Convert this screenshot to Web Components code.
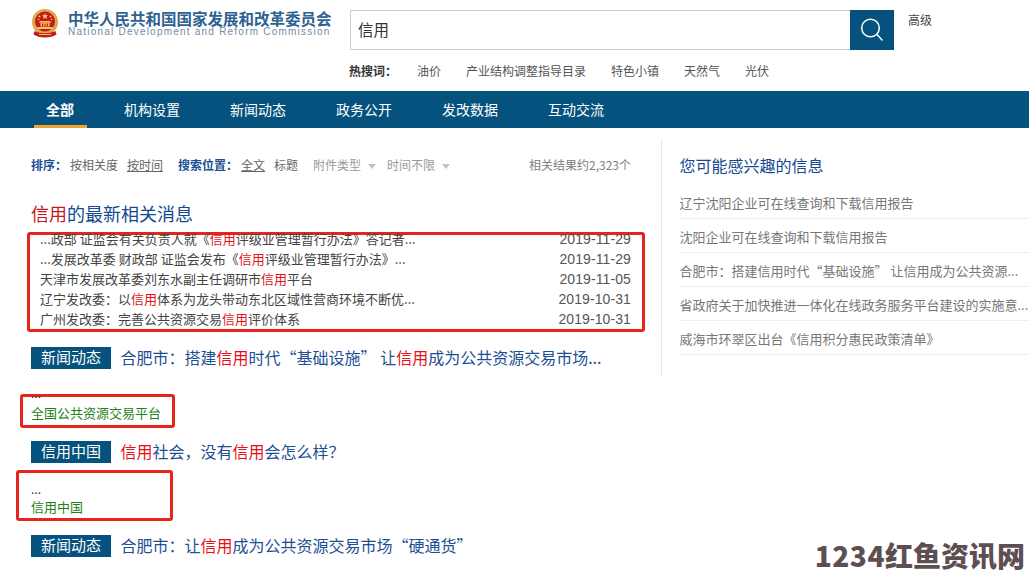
<!DOCTYPE html>
<html lang="zh-CN">
<head>
<meta charset="utf-8">
<title>信用 - 搜索</title>
<style>
  html, body { margin: 0; background: #fff; overflow: hidden; }
  body { font-family: "Noto Sans CJK SC", "Liberation Sans", sans-serif; }
</style>
</head>
<body>
<search-page>
  <site-header></site-header>
  <main-nav></main-nav>
  <div style="display:flex;align-items:flex-start">
    <result-column>
      <filter-bar></filter-bar>
      <latest-news>
        <news-line date="2019-11-29">...政部 证监会有关负责人就《<hl-word>信用</hl-word>评级业管理暂行办法》答记者...</news-line>
        <news-line date="2019-11-29">...发展改革委 财政部 证监会发布《<hl-word>信用</hl-word>评级业管理暂行办法》...</news-line>
        <news-line date="2019-11-05">天津市发展改革委刘东水副主任调研市<hl-word>信用</hl-word>平台</news-line>
        <news-line date="2019-10-31">辽宁发改委<mid-punct>：</mid-punct>以<hl-word>信用</hl-word>体系为龙头带动东北区域性营商环境不断优...</news-line>
        <news-line date="2019-10-31">广州发改委<mid-punct>：</mid-punct>完善公共资源交易<hl-word>信用</hl-word>评价体系</news-line>
      </latest-news>
      <result-item tag="新闻动态" style="margin-top:15px">合肥市<mid-punct>：</mid-punct>搭建<hl-word>信用</hl-word>时代“基础设施” 让<hl-word>信用</hl-word>成为公共资源交易市场...</result-item>
      <source-box source="全国公共资源交易平台" style="margin:25px 0 0 -11px;width:155px;height:34px" top="-12" gap="3"></source-box>
      <result-item tag="信用中国" style="margin-top:13px"><hl-word>信用</hl-word>社会<mid-punct>，</mid-punct>没有<hl-word>信用</hl-word>会怎么样<mid-punct>？</mid-punct></result-item>
      <source-box source="信用中国" style="margin:7px 0 0 -15px;width:157px;height:51px" top="8" gap="1" indent="12"></source-box>
      <result-item tag="新闻动态" style="margin-top:14px">合肥市<mid-punct>：</mid-punct>让<hl-word>信用</hl-word>成为公共资源交易市场“硬通货”</result-item>
    </result-column>
    <side-panel>
      <side-link>辽宁沈阳企业可在线查询和下载信用报告</side-link>
      <side-link>沈阳企业可在线查询和下载信用报告</side-link>
      <side-link>合肥市<mid-punct>：</mid-punct>搭建信用时代“基础设施” 让信用成为公共资源...</side-link>
      <side-link>省政府关于加快推进一体化在线政务服务平台建设的实施意...</side-link>
      <side-link>威海市环翠区出台《信用积分惠民政策清单》</side-link>
    </side-panel>
  </div>
</search-page>

<script>
class SearchPage extends HTMLElement {
  constructor() {
    super();
    const shadowRoot = this.attachShadow({ mode: 'open' });
    shadowRoot.innerHTML = `
      <style>
        :host {
          display: block;
          position: relative;
          width: 1029px;
          height: 580px;
          overflow: hidden;
        }
        .watermark {
          position: absolute;
          right: 4px;
          top: 535px;
          font-size: 28px;
          line-height: 40px;
          font-weight: 900;
          color: #5d4f51;
          white-space: nowrap;
          text-shadow: 0 0 2px #fff, 0 0 2px #fff;
        }
        .watermark span { letter-spacing: 0.5px; }
      </style>
      <slot></slot>
      <div class="watermark"><span>1234</span>红鱼资讯网</div>
    `;
  }
}

class SiteHeader extends HTMLElement {
  constructor() {
    super();
    const shadowRoot = this.attachShadow({ mode: 'open' });
    shadowRoot.innerHTML = `
      <style>
        :host {
          display: block;
          height: 91px;
          position: relative;
        }
        .top {
          display: flex;
          align-items: flex-start;
          height: 60px;
        }
        .logo {
          display: flex;
          margin: 9px 9px 0 31px;
          width: 28px;
          height: 30px;
          flex: none;
        }
        .name {
          width: 282px;
          margin-top: 10px;
          flex: none;
        }
        .cn {
          font-size: 15.5px;
          line-height: 16px;
          font-weight: 700;
          color: #2f6290;
          white-space: nowrap;
        }
        .en {
          font-family: "Liberation Sans", sans-serif;
          font-size: 10px;
          line-height: 10px;
          margin-top: 1px;
          letter-spacing: 1.22px;
          color: #6f8ca6;
          white-space: nowrap;
        }
        .search {
          display: flex;
          margin-top: 10px;
          width: 544px;
          height: 40px;
          flex: none;
        }
        .input {
          flex: 1;
          box-sizing: border-box;
          border: 1px solid #ccc;
          border-right: 0;
          padding-left: 7px;
          font-size: 15.5px;
          line-height: 37px;
          color: #333;
        }
        .btn {
          width: 44px;
          background: #05527e;
          display: flex;
          align-items: center;
          justify-content: center;
        }
        .adv {
          margin: 11px 0 0 14px;
          font-size: 12px;
          line-height: 18px;
          color: #444;
        }
        .hot {
          display: flex;
          margin: 1px 0 0 349px;
          font-size: 12px;
          line-height: 20px;
          color: #555;
          gap: 25px;
          white-space: nowrap;
        }
        .hot b {
          color: #333;
          margin-right: -5px;
        }
      </style>
      <div class="top">
        <div class="logo">
          <svg width="28" height="30" viewBox="0 0 28 30">
            <circle cx="14" cy="13" r="13" fill="#dba84a"/>
            <circle cx="14" cy="12.5" r="10" fill="#c8171e"/>
            <path d="M14 4l.9 2.2 2.3.1-1.8 1.5.6 2.3-2-1.3-2 1.3.6-2.3-1.8-1.5 2.3-.1z" fill="#f3cf5e"/>
            <circle cx="8.5" cy="7.5" r="1" fill="#f3cf5e"/>
            <circle cx="19.5" cy="7.5" r="1" fill="#f3cf5e"/>
            <circle cx="7.5" cy="10.5" r="0.8" fill="#f3cf5e"/>
            <circle cx="20.5" cy="10.5" r="0.8" fill="#f3cf5e"/>
            <path d="M9 12h10l1.2 1.8H7.8zM9.5 14h9v3.5h-9zM6.5 18h15v2h-15z" fill="#f0c75a"/>
            <path d="M11 14.6h1.2v3H11zM13.4 14.6h1.2v3h-1.2zM15.8 14.6H17v3h-1.2z" fill="#c8171e"/>
            <path d="M3.5 22c3 1.6 6.500 2.200 10.500 2.200S21.500 23.600 24.500 22l1 3.500c-3 2-7 3-11.500 3s-8.500-1-11.500-3z" fill="#c8171e"/>
            <path d="M8 25.500h12" stroke="#f0c75a" stroke-width="1"/>
          </svg>
        </div>
        <div class="name">
          <div class="cn">中华人民共和国国家发展和改革委员会</div>
          <div class="en">National Development and Reform Commission</div>
        </div>
        <div class="search">
          <div class="input">信用</div>
          <div class="btn">
            <svg width="26" height="26" viewBox="0 0 26 26" fill="none" stroke="#fff" stroke-width="1.5">
              <circle cx="11.500" cy="11" r="8.800"/>
              <path d="M18 17.500l5 5.500" stroke-linecap="round"/>
            </svg>
          </div>
        </div>
        <div class="adv">高级</div>
      </div>
      <div class="hot">
        <b>热搜词：</b>
        <span>油价</span>
        <span>产业结构调整指导目录</span>
        <span>特色小镇</span>
        <span>天然气</span>
        <span>光伏</span>
      </div>
    `;
  }
}

class MainNav extends HTMLElement {
  constructor() {
    super();
    const shadowRoot = this.attachShadow({ mode: 'open' });
    shadowRoot.innerHTML = `
      <style>
        :host {
          display: flex;
          gap: 25px;
          box-sizing: border-box;
          height: 37px;
          padding-left: 34px;
          background: #05527e;
        }
        span {
          box-sizing: border-box;
          height: 37px;
          padding: 0 12px;
          font-size: 14px;
          line-height: 36px;
          color: #fff;
        }
        .on {
          width: 53px;
          font-weight: 700;
          border-bottom: 3px solid #f0a331;
        }
        span:nth-child(n+4) { margin-left: 1px; }
      </style>
      <span class="on">全部</span>
      <span>机构设置</span>
      <span>新闻动态</span>
      <span>政务公开</span>
      <span>发改数据</span>
      <span>互动交流</span>
    `;
  }
}

class ResultColumn extends HTMLElement {
  constructor() {
    super();
    const shadowRoot = this.attachShadow({ mode: 'open' });
    shadowRoot.innerHTML = `
      <style>
        :host {
          display: block;
          flex: none;
          width: 600px;
          margin-left: 31px;
          padding-top: 28px;
        }
      </style>
      <slot></slot>
    `;
  }
}

class FilterBar extends HTMLElement {
  constructor() {
    super();
    const shadowRoot = this.attachShadow({ mode: 'open' });
    shadowRoot.innerHTML = `
      <style>
        :host {
          display: flex;
          align-items: center;
          box-sizing: border-box;
          height: 20px;
          padding-bottom: 2px;
          font-size: 12px;
          line-height: 18px;
          color: #666;
          white-space: nowrap;
        }
        b { color: #1d4f94; }
        u { color: #666; }
        .dim { color: #999; }
        .caret {
          width: 0;
          height: 0;
          margin: 2px 0 0 7px;
          border: 4px solid transparent;
          border-top: 5px solid #c2c2c2;
          border-bottom: 0;
        }
        .total {
          margin-left: auto;
          color: #808080;
        }
      </style>
      <b>排序：</b>
      <span style="margin-left:3px">按相关度</span>
      <u style="margin-left:9px">按时间</u>
      <b style="margin-left:15px">搜索位置：</b>
      <u style="margin-left:3px">全文</u>
      <span style="margin-left:9px">标题</span>
      <span class="dim" style="margin-left:15px">附件类型</span>
      <i class="caret"></i>
      <span class="dim" style="margin-left:11px">时间不限</span>
      <i class="caret"></i>
      <span class="total">相关结果约2,323个</span>
    `;
  }
}

class LatestNews extends HTMLElement {
  constructor() {
    super();
    const shadowRoot = this.attachShadow({ mode: 'open' });
    shadowRoot.innerHTML = `
      <style>
        :host { display: block; }
        h2 {
          margin: 25px 0 5px;
          font-size: 18px;
          line-height: 25px;
          padding-bottom: 1px;
          font-weight: 400;
          color: #14498f;
        }
        h2 span { color: #c8161d; }
        .box {
          box-sizing: border-box;
          height: 100px;
          width: 618px;
          margin-left: -4px;
          padding: 0 11px 0 10px;
          border: 3px solid #e6261c;
          border-radius: 3px;
        }
        .rows { margin-top: -6px; }
      </style>
      <h2><span>信用</span>的最新相关消息</h2>
      <div class="box"><div class="rows"><slot></slot></div></div>
    `;
  }
}

class NewsLine extends HTMLElement {
  constructor() {
    super();
    const shadowRoot = this.attachShadow({ mode: 'open' });
    shadowRoot.innerHTML = `
      <style>
        :host {
          display: flex;
          justify-content: space-between;
          height: 20px;
          font-size: 13px;
          line-height: 20px;
          color: #444;
          white-space: nowrap;
        }
        .date {
          font-family: "Liberation Sans", sans-serif;
          font-size: 14px;
          letter-spacing: 0.1px;
          color: #555;
        }
      </style>
      <span><slot></slot></span>
      <span class="date"></span>
    `;
    shadowRoot.querySelector('.date').textContent = this.getAttribute('date');
  }
}

class ResultItem extends HTMLElement {
  constructor() {
    super();
    const shadowRoot = this.attachShadow({ mode: 'open' });
    shadowRoot.innerHTML = `
      <style>
        :host {
          display: flex;
          align-items: center;
          gap: 9.5px;
          height: 22px;
          white-space: nowrap;
        }
        .tag {
          width: 80px;
          height: 22px;
          flex: none;
          background: #05527e;
          color: #fff;
          font-size: 15px;
          line-height: 20px;
          text-align: center;
        }
        .title {
          font-size: 16px;
          line-height: 21px;
          height: 22px;
          color: #1e4f93;
        }
      </style>
      <span class="tag"></span>
      <span class="title"><slot></slot></span>
    `;
    shadowRoot.querySelector('.tag').textContent = this.getAttribute('tag');
  }
}

class SourceBox extends HTMLElement {
  constructor() {
    super();
    const shadowRoot = this.attachShadow({ mode: 'open' });
    shadowRoot.innerHTML = `
      <style>
        :host {
          display: block;
          box-sizing: border-box;
          border: 3px solid #e6261c;
          border-radius: 3px;
          padding-left: 8px;
          white-space: nowrap;
        }
        .dots {
          font-size: 12px;
          line-height: 16px;
          color: #333;
        }
        .src {
          font-size: 13px;
          line-height: 18px;
          color: #1d8216;
        }
      </style>
      <div class="dots">...</div>
      <div class="src"></div>
    `;
    const dots = shadowRoot.querySelector('.dots');
    dots.style.marginTop = this.getAttribute('top') + 'px';
    dots.style.marginBottom = this.getAttribute('gap') + 'px';
    shadowRoot.querySelector('.src').textContent = this.getAttribute('source');
    if (this.hasAttribute('indent')) this.style.paddingLeft = this.getAttribute('indent') + 'px';
  }
}

class SidePanel extends HTMLElement {
  constructor() {
    super();
    const shadowRoot = this.attachShadow({ mode: 'open' });
    shadowRoot.innerHTML = `
      <style>
        :host {
          display: block;
          box-sizing: border-box;
          width: 368px;
          height: 236px;
          margin: 12px 0 0 30px;
          padding: 16px 0 0 17.5px;
          border-left: 1px solid #e6e6e6;
        }
        h3 {
          margin: 0 0 9px;
          font-size: 16px;
          line-height: 19px;
          padding-bottom: 1px;
          font-weight: 400;
          color: #14498f;
        }
      </style>
      <h3>您可能感兴趣的信息</h3>
      <slot></slot>
    `;
  }
}

class SideLink extends HTMLElement {
  constructor() {
    super();
    const shadowRoot = this.attachShadow({ mode: 'open' });
    shadowRoot.innerHTML = `
      <style>
        :host {
          display: block;
          height: 33px;
          font-size: 13px;
          line-height: 36px;
          color: #777;
          border-bottom: 1px solid #eee;
          white-space: nowrap;
        }
      </style>
      <slot></slot>
    `;
  }
}

// inline elements: no whitespace in the shadow root, it would render as a gap
class HlWord extends HTMLElement {
  constructor() {
    super();
    const shadowRoot = this.attachShadow({ mode: 'open' });
    shadowRoot.innerHTML = '<style>:host { color: #e8101a; }</style><slot></slot>';
  }
}

// the TC face centres full-width punctuation, as the reference does
class MidPunct extends HTMLElement {
  constructor() {
    super();
    const shadowRoot = this.attachShadow({ mode: 'open' });
    shadowRoot.innerHTML = '<style>:host { font-family: "Noto Sans CJK TC", sans-serif; }</style><slot></slot>';
  }
}

customElements.define('search-page', SearchPage);
customElements.define('site-header', SiteHeader);
customElements.define('main-nav', MainNav);
customElements.define('result-column', ResultColumn);
customElements.define('filter-bar', FilterBar);
customElements.define('latest-news', LatestNews);
customElements.define('news-line', NewsLine);
customElements.define('result-item', ResultItem);
customElements.define('source-box', SourceBox);
customElements.define('side-panel', SidePanel);
customElements.define('side-link', SideLink);
customElements.define('hl-word', HlWord);
customElements.define('mid-punct', MidPunct);
</script>
</body>
</html>
